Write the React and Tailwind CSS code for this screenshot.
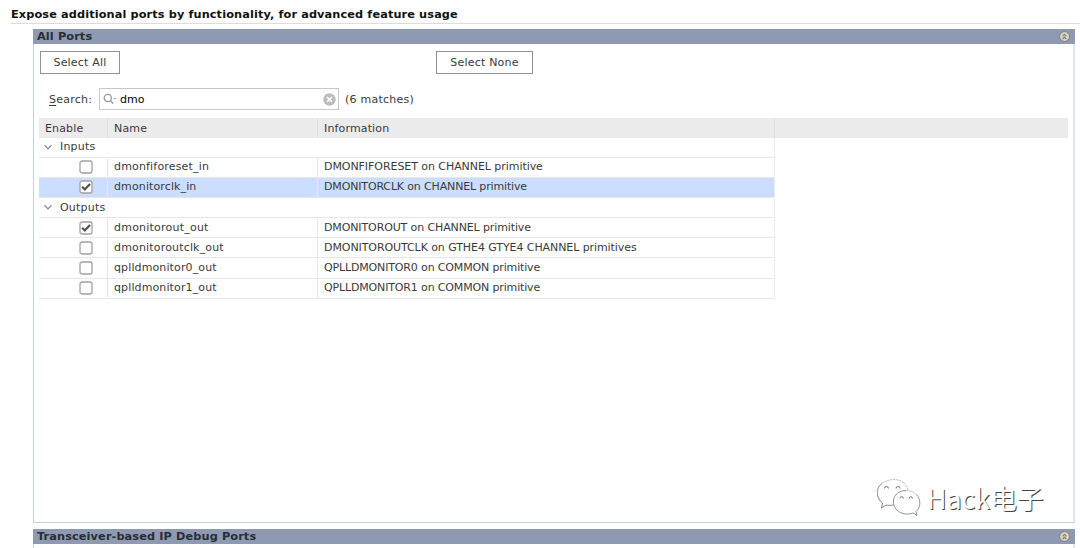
import React from 'react';

const GROUPS = [
  {
    name: 'Inputs',
    ports: [
      { name: 'dmonfiforeset_in', info: 'DMONFIFORESET on CHANNEL primitive', nameFit: 'tracking-[0.17px]', infoFit: 'tracking-[-0.06px]' },
      { name: 'dmonitorclk_in', info: 'DMONITORCLK on CHANNEL primitive', nameFit: 'tracking-[0.12px]', infoFit: 'tracking-[-0.15px]', enabled: true, selected: true },
    ],
  },
  {
    name: 'Outputs',
    ports: [
      { name: 'dmonitorout_out', info: 'DMONITOROUT on CHANNEL primitive', nameFit: 'tracking-[0.22px]', infoFit: 'tracking-[-0.12px]', enabled: true },
      { name: 'dmonitoroutclk_out', info: 'DMONITOROUTCLK on GTHE4 GTYE4 CHANNEL primitives', nameFit: 'tracking-[0.17px]', infoFit: 'tracking-[-0.08px]' },
      { name: 'qplldmonitor0_out', info: 'QPLLDMONITOR0 on COMMON primitive', nameFit: 'tracking-[0.12px]', infoFit: 'tracking-[-0.15px]' },
      { name: 'qplldmonitor1_out', info: 'QPLLDMONITOR1 on COMMON primitive', nameFit: 'tracking-[0.12px]', infoFit: 'tracking-[-0.15px]' },
    ],
  },
];

const CollapseIcon = () => (
  <svg className="w-[11px] h-[11px]" viewBox="0 0 11 11" fill="none">
    <circle cx="5.5" cy="5.5" r="4.9" fill="#d9d8c9" stroke="#77786f" strokeWidth="0.9" />
    <path d="M3.6 5.2 5.5 3.4 7.4 5.2M3.6 8 5.5 6.2 7.4 8" stroke="#85857b" strokeWidth="1.2" />
  </svg>
);

const SectionHeader = ({ title }) => (
  <div className="flex h-[15px] items-center justify-between bg-[#8e99b2] pl-[4px] pr-[5px] text-[11.3px] font-bold tracking-[0.12px] text-[#2a2d36]">
    <span>{title}</span>
    <CollapseIcon />
  </div>
);

const Checkbox = ({ checked }) => (
  <svg className="w-[14px] h-[14px]" viewBox="0 0 14 14" fill="none">
    <rect x="1" y="1" width="12" height="12" rx="2" fill="#fff" stroke="#a0a0a0" strokeWidth="1.3" />
    {checked && <path d="M3.2 6.7 5.8 9.4 11 4" stroke="#505050" strokeWidth="2.2" />}
  </svg>
);

const GroupRow = ({ name }) => (
  <div className="flex h-[20.17px] items-center border-b border-[#e7e7e7] pb-px pl-[5px]">
    <svg className="mr-[8px] h-[8px] w-[8px]" viewBox="0 0 8 8" fill="none">
      <path d="M0.5 2.2 4 5.8 7.5 2.2" stroke="#858585" strokeWidth="1.2" />
    </svg>
    <span className="tracking-[0.2px]">{name}</span>
  </div>
);

const PortRow = ({ port }) => (
  <div className={`flex h-[20.17px] border-b border-[#e7e7e7] ${port.selected ? 'bg-[#cbdeff]' : ''}`}>
    <div className="flex w-[69px] items-center border-r border-[#e7e7e7] pl-[40px]">
      <Checkbox checked={port.enabled} />
    </div>
    <div className={`flex w-[210px] items-center border-r border-[#e7e7e7] pb-px pl-[6px] ${port.nameFit}`}>{port.name}</div>
    <div className={`flex items-center pb-px pl-[6px] ${port.infoFit}`}>{port.info}</div>
  </div>
);

const WeChatIcon = () => (
  <svg className="h-[40px] w-[45px]" viewBox="0 0 45 40" fill="none" stroke="#777" strokeWidth="0.8">
    <path d="M16.500 26C14 26.500 11 26.500 9 26L4.500 29 5.500 24C-1 19-2 9 5 4.500" stroke="#666" />
    <path d="M5 4.500C12-1 24-1 29 6Q30.500 8 31 11" stroke="#aaa" strokeDasharray="2 1" />
    <path d="M29.500 11.500C20 11.500 15.500 18 16.500 24.500C18 33.500 28 37 36 34L40 36.500 39 32.500C44 28.500 44 20 39.500 15.500" fill="#fff" />
    <path d="M29.500 11.500Q36 11.500 39.500 15.500" stroke="#bbb" />
    <path d="M7.500 9.500A2 2 0 0 1 11.500 9.500M19 9.500A2 2 0 0 1 23 9.500M23 19.500A1.700 1.700 0 0 1 26.500 19.500M32 19.500A1.700 1.700 0 0 1 35.500 19.500" stroke="#555" />
  </svg>
);

const App = () => {
  return (
    <div className="relative h-[548px] w-[1080px] overflow-hidden bg-white font-['DejaVu_Sans',sans-serif] text-[11px] leading-[15px] text-[#3a3a3a]">
      <h1 className="ml-[11px] h-[24px] border-b border-[#dcdcdc] pt-[7px] text-[11.3px] font-bold tracking-[0.12px] text-[#111]">
        Expose additional ports by functionality, for advanced feature usage
      </h1>

      <section className="ml-[33px] mt-[5px] h-[494px] w-[1042px]">
        <SectionHeader title="All Ports" />
        <div className="h-[479px] border border-t-0 border-[#c3d1e5] border-r-2 border-r-[#dde6f3] pl-[5px] pt-[7px]">
          <div className="flex pl-px tracking-[0.2px]">
            <button className="h-[23px] w-[80px] border border-[#929292]">Select All</button>
            <button className="ml-[316px] h-[23px] w-[97px] border border-[#929292]">Select None</button>
          </div>

          <div className="mt-[14px] flex h-[22px] items-center pl-[10px]">
            <label className="w-[50px] tracking-[0.25px]"><span className="underline underline-offset-2">S</span>earch:</label>
            <div className="flex h-[22px] w-[240px] items-center border border-[#c8c8c8] pl-[3px] pr-[2px] text-black">
              <svg className="h-[12px] w-[14px]" viewBox="0 0 14 12" fill="none" stroke="#999">
                <circle cx="4.8" cy="5" r="3.6" strokeWidth="1.3" />
                <path d="M7.5 7.7 10.2 10.5" strokeWidth="1.5" />
                <path d="M10.5 5H13.5L12 6.5Z" fill="#999" stroke="none" />
              </svg>
              <span className="ml-[3px] flex-1">dmo</span>
              <svg className="h-[13px] w-[13px]" viewBox="0 0 13 13">
                <circle cx="6.5" cy="6.5" r="6.2" fill="#bcbcbc" />
                <path d="M4 4 9 9M9 4 4 9" stroke="#fff" strokeWidth="1.6" />
              </svg>
            </div>
            <span className="ml-[6px] tracking-[0.25px]">(6 matches)</span>
          </div>

          <div className="mt-[8px] flex h-[19.5px] w-[1029px] items-center bg-[#ebebeb] tracking-[0.15px]">
            <div className="flex h-full w-[69px] items-center border-r border-[#dfdfdf] pl-[6px] pt-px">Enable</div>
            <div className="flex h-full w-[210px] items-center border-r border-[#dfdfdf] pl-[6px] pt-px">Name</div>
            <div className="flex h-full w-[457px] items-center border-r border-[#dfdfdf] pl-[6px] pt-px">Information</div>
          </div>
          <div className="w-[736px] border-r border-[#ececec]">
            {GROUPS.map((group) => (
              <div key={group.name}>
                <GroupRow name={group.name} />
                {group.ports.map((port) => (
                  <PortRow key={port.name} port={port} />
                ))}
              </div>
            ))}
          </div>
        </div>
      </section>

      <section className="ml-[33px] mt-[6px] w-[1042px]">
        <SectionHeader title="Transceiver-based IP Debug Ports" />
        <div className="h-[10px] border-x border-[#c3d1e5] border-r-2 border-r-[#dde6f3]" />
      </section>

      {/* watermark floats over the empty part of the panel */}
      <div className="absolute left-[877px] top-[479px] flex items-center">
        <WeChatIcon />
        <span className="ml-[5px] -mt-[2px] whitespace-nowrap font-['Noto_Sans_CJK_SC',sans-serif] text-[26.8px] leading-[40px] text-white [text-shadow:1px_1px_0.5px_#444]">
          Hack电子
        </span>
      </div>
    </div>
  );
};

export default App;
